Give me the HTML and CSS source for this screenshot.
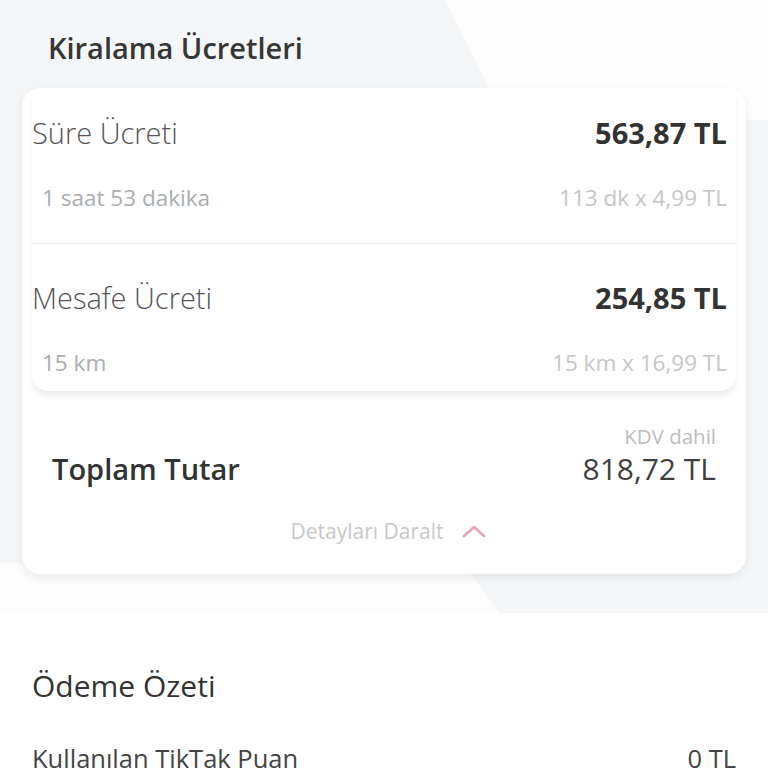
FILE: index.html
```html
<!DOCTYPE html>
<html lang="tr">
<head>
    <meta charset="UTF-8">
    <meta name="viewport" content="width=device-width, initial-scale=1.0">
    <title>Kiralama Ücretleri</title>
    <link rel="stylesheet" href="styles.css">
</head>
<body>

<section class="rental">
    <h2 class="section-title">Kiralama Ücretleri</h2>

    <div class="card">
        <div class="fees">
            <div class="fee">
                <div class="fee-row">
                    <span class="fee-label">Süre Ücreti</span>
                    <span class="fee-amount">563,87 TL</span>
                </div>
                <div class="fee-row fee-sub">
                    <span class="fee-info">1 saat 53 dakika</span>
                    <span class="fee-calc">113 dk x 4,99 TL</span>
                </div>
            </div>
            <div class="fee">
                <div class="fee-row">
                    <span class="fee-label">Mesafe Ücreti</span>
                    <span class="fee-amount">254,85 TL</span>
                </div>
                <div class="fee-row fee-sub">
                    <span class="fee-info">15 km</span>
                    <span class="fee-calc">15 km x 16,99 TL</span>
                </div>
            </div>
        </div>

        <div class="total">
            <span class="total-label">Toplam Tutar</span>
            <div class="total-right">
                <span class="total-note">KDV dahil</span>
                <span class="total-amount">818,72 TL</span>
            </div>
        </div>

        <div class="toggle">
            <span>Detayları Daralt</span>
            <svg class="chevron" width="26" height="16" viewBox="0 0 26 16">
                <polyline points="3,13 13,4 23,13" fill="none" stroke="#e4a9b6" stroke-width="3" stroke-linecap="round" stroke-linejoin="round"/>
            </svg>
        </div>
    </div>
</section>

<section class="payment">
    <h2 class="payment-title">Ödeme Özeti</h2>
    <div class="pay-row">
        <span>Kullanılan TikTak Puan</span>
        <span>0 TL</span>
    </div>
</section>

</body>
</html>
```

FILE: styles.css
```css
body {
    margin: 0;
    font-family: "Open Sans", "Noto Sans", sans-serif;
    background: #ffffff;
    color: #333;
}
.rental {
    position: relative;
    background: #f5f6f8;
    padding: 30px 22px 39px;
    overflow: hidden;
}
/* soft diagonal shapes behind the card */
.rental::before,
.rental::after {
    content: "";
    position: absolute;
    background: #fdfdfd;
}
.rental::before {
    top: 0;
    right: 0;
    width: 323px;
    height: 120px;
    clip-path: polygon(0 0, 100% 0, 100% 100%, 60px 100%);
}
.rental::after {
    left: 0;
    bottom: 0;
    width: 500px;
    height: 50px;
    clip-path: polygon(0 0, 462px 0, 100% 100%, 0 100%);
}
.section-title {
    position: relative;
    z-index: 1;
    margin: 0 0 22px 26px;
    font-size: 29px;
    line-height: 36px;
    font-weight: 600;
    color: #363636;
}
.card {
    position: relative;
    z-index: 1;
    background: #fff;
    border-radius: 18px;
    padding: 0 10px 30px;
    box-shadow: 0 4px 10px rgba(0, 0, 0, 0.07);
}
.fees {
    border-radius: 16px;
    box-shadow: 0 5px 6px rgba(0, 0, 0, 0.07);
}
.fee {
    padding: 38px 9px 31px 0;
    border-bottom: 1px solid #ebebeb;
}
.fee:first-child {
    padding-top: 29px;
}
.fee:last-child {
    padding-bottom: 14px;
    border-bottom: none;
}
.fee-row {
    display: flex;
    justify-content: space-between;
    align-items: center;
}
.fee-label {
    font-size: 29px;
    line-height: 32px;
    font-weight: 300;
    color: #555;
}
.fee-amount {
    font-size: 29px;
    line-height: 32px;
    font-weight: 700;
    color: #333;
}
.fee-sub {
    margin-top: 35px;
    font-size: 22.5px;
    line-height: 28px;
}
.fee-info {
    padding-left: 10px;
    color: #a9aeb1;
}
.fee-calc {
    color: #c6c6c6;
}
.total {
    display: flex;
    justify-content: space-between;
    align-items: flex-end;
    margin-top: 34px;
    padding: 0 20px;
}
.total-label {
    font-size: 29px;
    line-height: 34px;
    font-weight: 600;
    color: #333;
}
.total-right {
    display: flex;
    flex-direction: column;
    align-items: flex-end;
}
.total-note {
    font-size: 20.5px;
    line-height: 22px;
    color: #bdbdbd;
    margin-bottom: 5px;
}
.total-amount {
    font-size: 30px;
    line-height: 34px;
    font-weight: 400;
    color: #3f3f3f;
}
.toggle {
    display: flex;
    justify-content: center;
    align-items: center;
    gap: 18px;
    margin-top: 32px;
    padding-left: 10px;
    font-size: 21px;
    line-height: 26px;
    color: #c8c8c8;
}
.payment {
    padding: 55px 32px 0;
}
.payment-title {
    margin: 0;
    font-size: 30px;
    line-height: 36px;
    font-weight: 400;
    color: #333;
}
.pay-row {
    display: flex;
    justify-content: space-between;
    margin-top: 38px;
    font-size: 25.5px;
    line-height: 32px;
    color: #444;
}
```
